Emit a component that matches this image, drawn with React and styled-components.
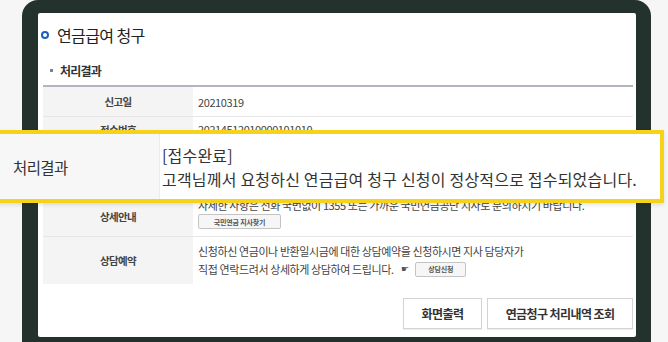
import React from "react";
import styled, { createGlobalStyle } from "styled-components";

const GlobalStyle = createGlobalStyle`
  html, body { margin: 0; padding: 0; background: #f4f5f4; }
  body { font-family: "Noto Sans CJK KR", "Noto Sans", sans-serif; color: #333; }
`;

const Stage = styled.div`
  position: relative;
  width: 668px;
  height: 342px;
  overflow: hidden;
  padding-left: 22px;
  box-sizing: border-box;
  background: #f5f6f5;
`;

const Device = styled.div`
  width: 629px;
  height: 342px;
  box-sizing: border-box;
  background: #24322e;
  border-radius: 16px 16px 0 0;
  padding: 13px 15px 5px 16px;
`;

const Screen = styled.div`
  height: 100%;
  background: #fff;
  border-radius: 2px;
  display: flex;
  flex-direction: column;
  padding: 0 3px 0 5px;
  box-sizing: border-box;
`;

const Title = styled.h1`
  margin: 0;
  height: 43px;
  display: flex;
  align-items: center;
  gap: 8px;
  font-size: 16px;
  font-weight: 400;
  letter-spacing: -0.6px;
  color: #222;
`;

const Ring = styled.span`
  width: 4px;
  height: 4px;
  border: 2px solid #1b5fb8;
  border-radius: 50%;
  margin-left: -2px;
`;

const SubTitle = styled.h2`
  margin: 0;
  height: 29px;
  display: flex;
  align-items: center;
  gap: 7px;
  padding-left: 7px;
  font-size: 12px;
  font-weight: 700;
  letter-spacing: -0.8px;
  color: #333;
  &::before {
    content: "";
    width: 3px;
    height: 3px;
    background: #7a8190;
  }
`;

const Table = styled.div`
  border-top: 2px solid #b3b5bd;
  display: grid;
  grid-template-columns: 150px 1fr;
`;

const Label = styled.div`
  background: #f4f4f4;
  height: ${(p) => p.$h}px;
  display: flex;
  align-items: center;
  justify-content: center;
  font-size: 10.5px;
  font-weight: 700;
  letter-spacing: -0.6px;
  color: #444;
  border-bottom: 1px solid ${(p) => (p.$last ? "transparent" : "#e6e6e6")};
  box-sizing: border-box;
`;

const Value = styled.div`
  height: ${(p) => p.$h}px;
  display: flex;
  flex-direction: column;
  justify-content: ${(p) => (p.$top ? "flex-start" : "center")};
  padding: ${(p) => (p.$top ? "1px 0 0 5px" : "0 0 0 5px")};
  font-size: 11px;
  letter-spacing: -0.4px;
  color: #444;
  line-height: 18px;
  border-bottom: 1px solid ${(p) => (p.$last ? "transparent" : "#e6e6e6")};
  box-sizing: border-box;
`;

const Line = styled.div`
  display: flex;
  align-items: center;
  gap: 7px;
  white-space: nowrap;
  line-height: ${(p) => p.$lh || 18}px;
`;

const TinyButton = styled.span`
  display: inline-flex;
  align-items: center;
  justify-content: center;
  width: ${(p) => p.$w}px;
  height: 15px;
  box-sizing: border-box;
  border: 1px solid #c4c4c4;
  border-radius: 2px;
  background: #f6f6f6;
  font-size: 7px;
  font-weight: 700;
  letter-spacing: -0.2px;
  color: #555;
  margin-top: ${(p) => p.$mt || 0}px;
`;

const Hand = styled.span`
  font-size: 9px;
  color: #555;
`;

const Actions = styled.div`
  display: flex;
  justify-content: flex-end;
  gap: 5px;
  margin-top: 14px;
`;

const Button = styled.button`
  height: 31px;
  width: ${(p) => p.$w}px;
  background: #fff;
  border: 1px solid #d4d4d4;
  box-shadow: 0 1px 1px rgba(0, 0, 0, 0.06);
  font-family: inherit;
  font-size: 12px;
  font-weight: 700;
  letter-spacing: -0.6px;
  color: #333;
  padding: 0;
`;

const Callout = styled.div`
  position: absolute;
  left: -4px;
  top: 130px;
  width: 668px;
  height: 73px;
  box-sizing: border-box;
  border: 4px solid #f6d31a;
  background: #fff;
  display: grid;
  grid-template-columns: 160px 1fr;
  box-shadow: 0 2px 4px rgba(0, 0, 0, 0.1);
`;

const CalloutLabel = styled.div`
  background: #f7f7f7;
  border-right: 1px solid #ececec;
  display: flex;
  align-items: center;
  padding-left: 13px;
  font-size: 15.5px;
  letter-spacing: -0.6px;
  color: #333;
`;

const CalloutText = styled.div`
  display: flex;
  flex-direction: column;
  justify-content: center;
  padding-left: 2px;
  font-size: 16px;
  line-height: 24px;
  letter-spacing: 0.2px;
  color: #333;
  white-space: nowrap;
`;

export default function App() {
  return (
    <>
      <GlobalStyle />
      <Stage>
        <Device>
          <Screen>
            <Title>
              <Ring />
              연금급여 청구
            </Title>
            <SubTitle>처리결과</SubTitle>
            <Table>
              <Label $h={30}>신고일</Label>
              <Value $h={30}>20210319</Value>
              <Label $h={25}>접수번호</Label>
              <Value $h={25}>20214512010000101010</Value>
              <Label $h={55}>처리결과</Label>
              <Value $h={55}>
                <Line>[접수완료]</Line>
              </Value>
              <Label $h={40}>상세안내</Label>
              <Value $h={40} $top>
                <Line $lh={14}>
                  자세한 사항은 전화 국번없이 1355 또는 가까운 국민연금공단 지사로 문의하시기 바랍니다.
                </Line>
                <Line>
                  <TinyButton $w={83} $mt={2}>국민연금 지사찾기</TinyButton>
                </Line>
              </Value>
              <Label $h={47} $last>상담예약</Label>
              <Value $h={47} $last>
                <Line>신청하신 연금이나 반환일시금에 대한 상담예약을 신청하시면 지사 담당자가</Line>
                <Line>
                  직접 연락드려서 상세하게 상담하여 드립니다.
                  <Hand>☛</Hand>
                  <TinyButton $w={51}>상담신청</TinyButton>
                </Line>
              </Value>
            </Table>
            <Actions>
              <Button $w={79}>화면출력</Button>
              <Button $w={146}>연금청구 처리내역 조회</Button>
            </Actions>
          </Screen>
        </Device>
        <Callout>
          <CalloutLabel>처리결과</CalloutLabel>
          <CalloutText>
            <div>[접수완료]</div>
            <div>고객님께서 요청하신 연금급여 청구 신청이 정상적으로 접수되었습니다.</div>
          </CalloutText>
        </Callout>
      </Stage>
    </>
  );
}
